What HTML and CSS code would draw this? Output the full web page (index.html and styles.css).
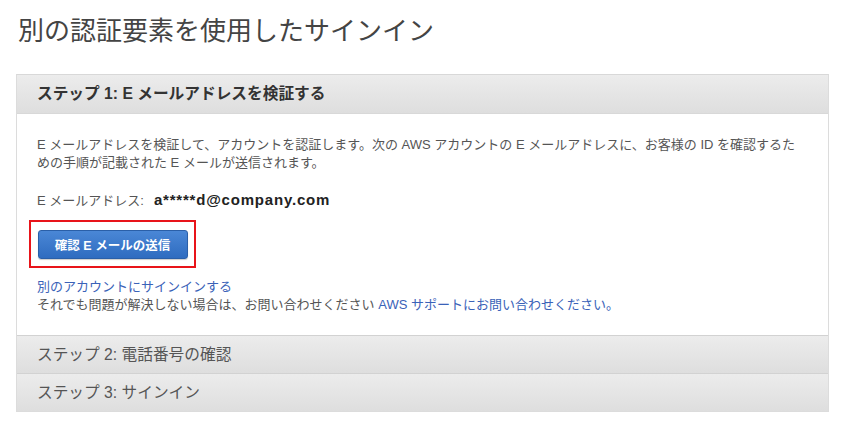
FILE: index.html
```html
<!DOCTYPE html>
<html lang="ja">
<head>
<meta charset="utf-8">
<link rel="stylesheet" href="styles.css">
</head>
<body>
<h1 class="title">別の認証要素を使用したサインイン</h1>
<div class="panel">
  <div class="step-head active">ステップ 1: E メールアドレスを検証する</div>
  <div class="step-body">
    <p class="desc">E メールアドレスを検証して、アカウントを認証します。次の AWS アカウントの E メールアドレスに、お客様の ID を確認するための手順が記載された E メールが送信されます。</p>
    <p class="email"><span class="label">E メールアドレス:</span><span class="addr">a*****d@company.com</span></p>
    <div class="highlight"><button class="btn">確認 E メールの送信</button></div>
    <div class="links">
      <a class="link">別のアカウントにサインインする</a><br>
      それでも問題が解決しない場合は、お問い合わせください <a class="link">AWS サポートにお問い合わせください。</a>
    </div>
  </div>
  <div class="step-head">ステップ 2: 電話番号の確認</div>
  <div class="step-head">ステップ 3: サインイン</div>
</div>
</body>
</html>
```
FILE: styles.css
```css
html, body {
  margin: 0;
  padding: 0;
  background: #fff;
}
body {
  font-family: "Liberation Sans", "Noto Sans CJK JP", sans-serif;
  color: #444;
  padding: 16px 22px 0 16px;
}
.title {
  font-weight: normal;
  font-size: 26px;
  line-height: 30px;
  margin: 0 0 28px 2px;
  color: #444;
}
.panel {
  width: 811px;
  border: 1px solid #dcdcdc;
  border-top-color: #d8d8d8;
}
.step-head {
  height: 37px;
  line-height: 37px;
  padding-left: 20px;
  font-size: 15.7px;
  color: #555;
  background: linear-gradient(#ececec, #dedede);
  border-top: 1px solid #d2d2d2;
}
.step-head:first-child {
  border-top: none;
  height: 38px;
  line-height: 38px;
}
.step-head.active {
  font-weight: bold;
  color: #333;
  border-bottom: 1px solid #d8d8d8;
}
.step-body {
  padding: 22px 20px 21px 20px;
  font-size: 13px;
  line-height: 18px;
  color: #555;
}
.desc {
  margin: 0;
}
.email {
  margin: 19px 0 0 0;
}
.label {
  margin-right: 10px;
}
.addr {
  font-weight: bold;
  font-size: 15px;
  letter-spacing: 0.8px;
  color: #222;
}
.highlight {
  margin: 10px 0 0 -8px;
  width: 163px;
  height: 44px;
  border: 2px solid #e8141a;
  display: flex;
  align-items: center;
  justify-content: center;
}
.btn {
  width: 150px;
  height: 29px;
  border: 1px solid #2a5fa8;
  border-radius: 3px;
  background: linear-gradient(#4a87d6, #2f6cc0);
  color: #fff;
  font-family: inherit;
  font-weight: bold;
  font-size: 12.5px;
  padding: 0;
  box-shadow: 0 1px 1px rgba(0,0,0,0.2);
}
.links {
  margin-top: 10px;
}
.link {
  color: #3a62b8;
  text-decoration: none;
}
```
